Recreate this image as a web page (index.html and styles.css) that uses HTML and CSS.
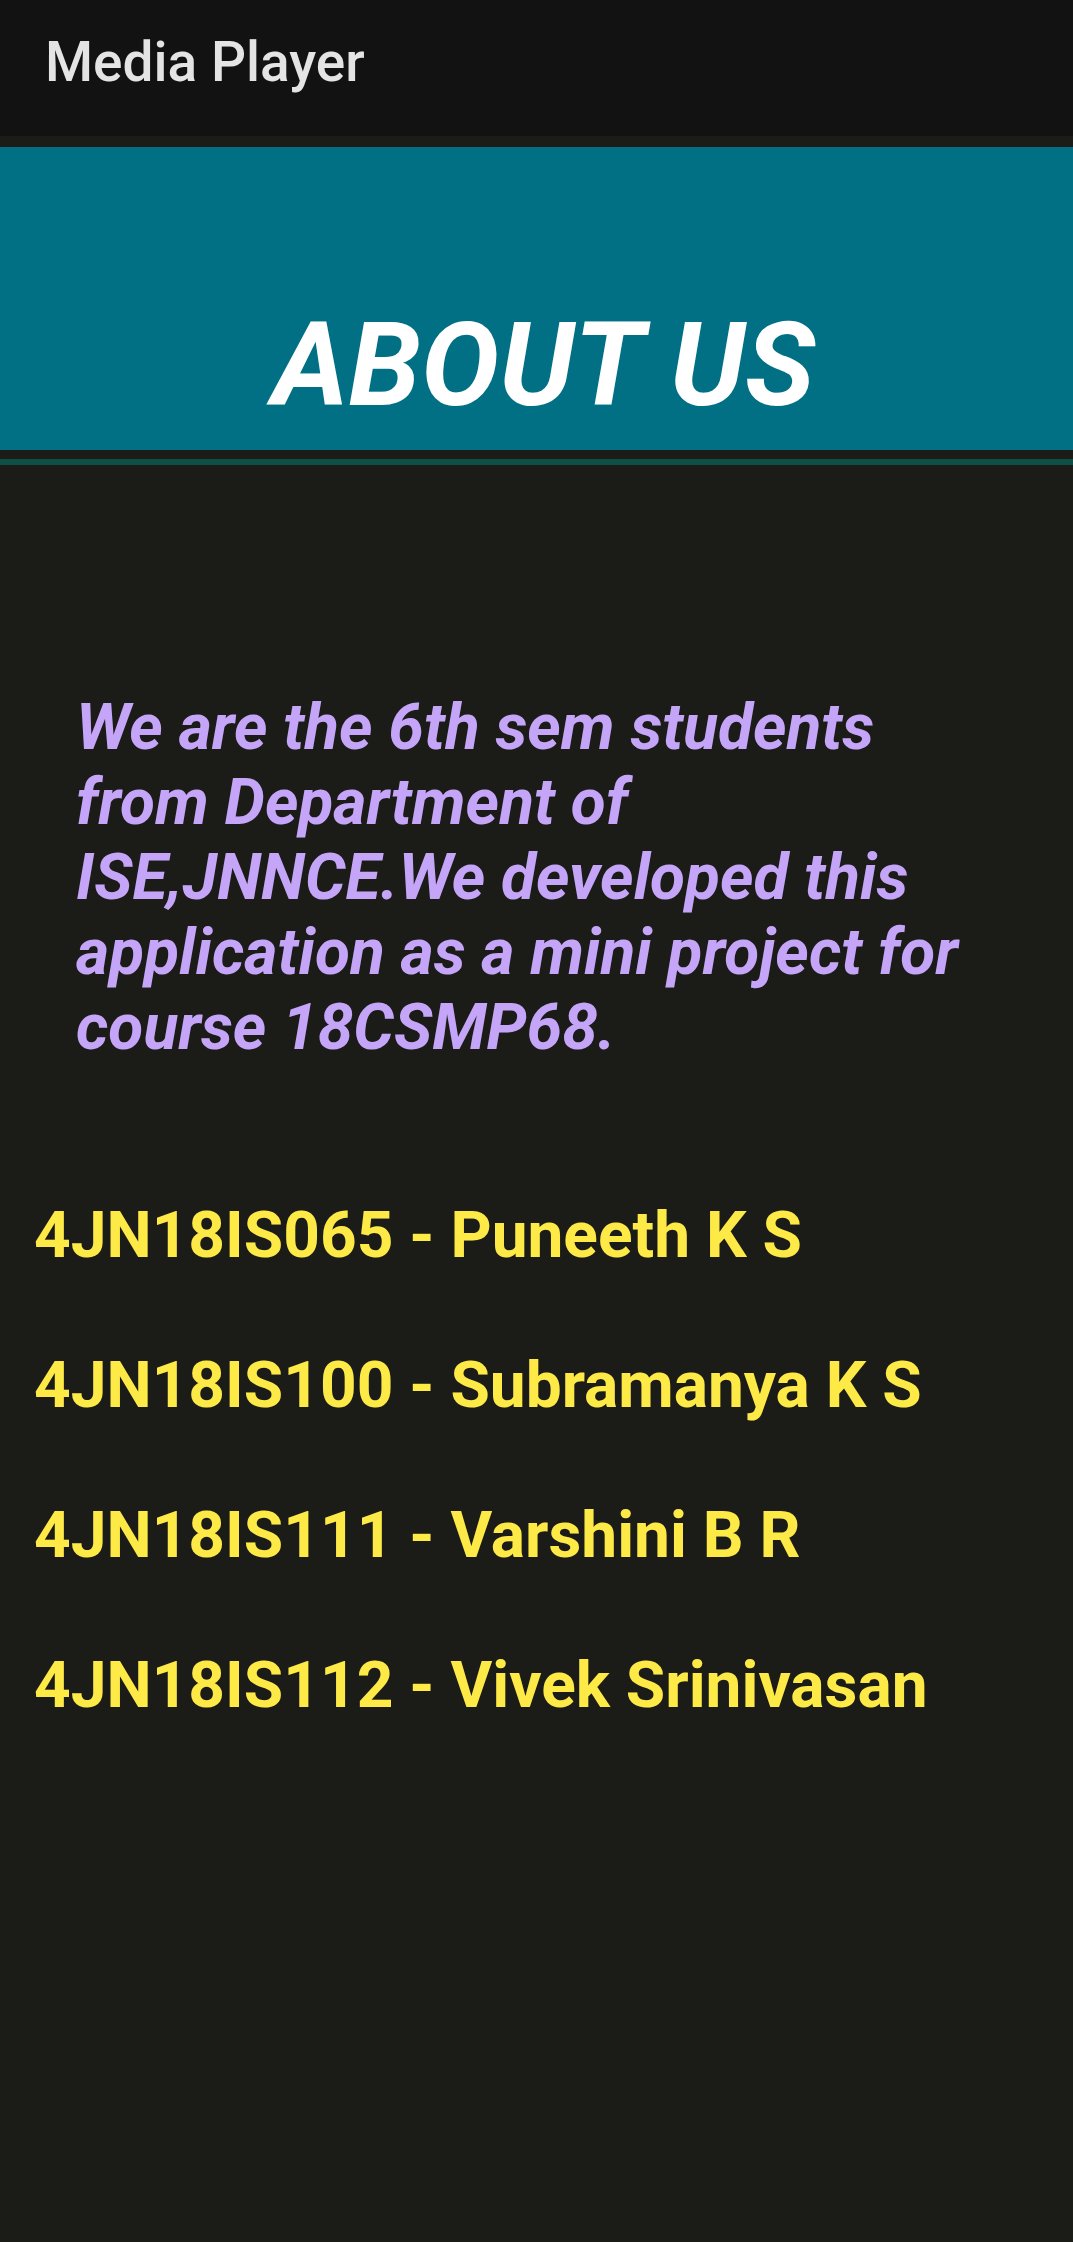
FILE: index.html
```html
<!DOCTYPE html>
<html lang="en">
<head>
<meta charset="utf-8">
<title>Media Player</title>
<link rel="stylesheet" href="styles.css">
</head>
<body>
<header class="appbar"><h1 class="appbar-title">Media Player</h1></header>
<section class="banner"><h2 class="banner-title">ABOUT US</h2></section>
<div class="divider"></div>
<p class="intro">We are the 6th sem students from Department of ISE,JNNCE.We developed this application as a mini project for course 18CSMP68.</p>
<ul class="members">
<li>4JN18IS065 - Puneeth K S</li>
<li>4JN18IS100 - Subramanya K S</li>
<li>4JN18IS111 - Varshini B R</li>
<li>4JN18IS112 - Vivek Srinivasan</li>
</ul>
</body>
</html>
```
FILE: styles.css
```css
html, body {
  margin: 0;
  padding: 0;
}
body {
  background: #1b1b17;
  font-family: Roboto, "Liberation Sans", sans-serif;
  min-height: 2242px;
}
.appbar {
  height: 136px;
  background: #121212;
  display: flex;
  align-items: center;
  padding-left: 45px;
  margin-bottom: 11px;
}
.appbar-title {
  margin: 0;
  font-size: 55px;
  font-weight: 500;
  color: #e4e4e4;
  line-height: 1;
  position: relative;
  top: -6px;
}
.banner {
  height: 303px;
  background: #016f84;
  display: flex;
  align-items: flex-end;
  justify-content: center;
  padding-left: 14px;
}
.banner-title {
  margin: 0 0 16px 0;
  font-size: 117px;
  font-weight: 700;
  font-style: italic;
  color: #ffffff;
  line-height: normal;
}
.divider {
  margin-top: 9px;
  height: 6px;
  background: #0f5046;
}
.intro {
  margin: 225px 0 0 0;
  padding: 0 60px 0 76px;
  font-size: 64px;
  line-height: 75px;
  font-weight: 700;
  font-style: italic;
  color: #c4a5f8;
}
.members {
  list-style: none;
  margin: 96px 0 0 0;
  padding: 0 0 0 34px;
}
.members li {
  font-size: 64px;
  line-height: 150px;
  font-weight: 700;
  color: #feea47;
}
```
